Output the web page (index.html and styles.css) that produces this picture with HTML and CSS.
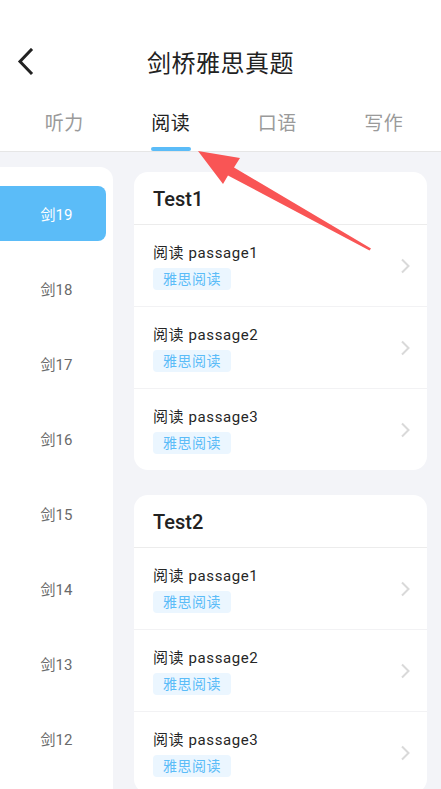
FILE: index.html
```html
<!DOCTYPE html>
<html lang="zh">
<head>
<meta charset="utf-8">
<title>剑桥雅思真题</title>
<link rel="stylesheet" href="styles.css">
</head>
<body>
<div class="page">
  <header class="header">
    <div class="back">
      <svg width="20" height="28" viewBox="0 0 20 28"><polyline points="14,2 3,13.5 14,25" fill="none" stroke="#222" stroke-width="3" stroke-linecap="square"/></svg>
    </div>
    <div class="title">剑桥雅思真题</div>
    <div></div>
  </header>
  <nav class="tabs">
    <div class="tab"><span class="tab-text">听力</span><span class="bar"></span></div>
    <div class="tab active"><span class="tab-text">阅读</span><span class="bar"></span></div>
    <div class="tab"><span class="tab-text">口语</span><span class="bar"></span></div>
    <div class="tab"><span class="tab-text">写作</span><span class="bar"></span></div>
  </nav>
  <main class="main">
    <aside class="side">
      <div class="side-item selected"><span class="pill">剑19</span></div>
      <div class="side-item"><span class="pill">剑18</span></div>
      <div class="side-item"><span class="pill">剑17</span></div>
      <div class="side-item"><span class="pill">剑16</span></div>
      <div class="side-item"><span class="pill">剑15</span></div>
      <div class="side-item"><span class="pill">剑14</span></div>
      <div class="side-item"><span class="pill">剑13</span></div>
      <div class="side-item"><span class="pill">剑12</span></div>
    </aside>
    <section class="content">
      <div class="card">
        <div class="card-head">Test1</div>
        <div class="row"><div class="row-main"><div class="row-title">阅读 passage1</div><span class="tag">雅思阅读</span></div><svg class="chev" width="10" height="16" viewBox="0 0 10 16"><polyline points="2,1.5 8.5,8 2,14.5" fill="none" stroke="#d9d9d9" stroke-width="2"/></svg></div>
        <div class="row"><div class="row-main"><div class="row-title">阅读 passage2</div><span class="tag">雅思阅读</span></div><svg class="chev" width="10" height="16" viewBox="0 0 10 16"><polyline points="2,1.5 8.5,8 2,14.5" fill="none" stroke="#d9d9d9" stroke-width="2"/></svg></div>
        <div class="row last"><div class="row-main"><div class="row-title">阅读 passage3</div><span class="tag">雅思阅读</span></div><svg class="chev" width="10" height="16" viewBox="0 0 10 16"><polyline points="2,1.5 8.5,8 2,14.5" fill="none" stroke="#d9d9d9" stroke-width="2"/></svg></div>
      </div>
      <div class="card">
        <div class="card-head">Test2</div>
        <div class="row"><div class="row-main"><div class="row-title">阅读 passage1</div><span class="tag">雅思阅读</span></div><svg class="chev" width="10" height="16" viewBox="0 0 10 16"><polyline points="2,1.5 8.5,8 2,14.5" fill="none" stroke="#d9d9d9" stroke-width="2"/></svg></div>
        <div class="row"><div class="row-main"><div class="row-title">阅读 passage2</div><span class="tag">雅思阅读</span></div><svg class="chev" width="10" height="16" viewBox="0 0 10 16"><polyline points="2,1.5 8.5,8 2,14.5" fill="none" stroke="#d9d9d9" stroke-width="2"/></svg></div>
        <div class="row last"><div class="row-main"><div class="row-title">阅读 passage3</div><span class="tag">雅思阅读</span></div><svg class="chev" width="10" height="16" viewBox="0 0 10 16"><polyline points="2,1.5 8.5,8 2,14.5" fill="none" stroke="#d9d9d9" stroke-width="2"/></svg></div>
      </div>
    </section>
  </main>
  <svg class="arrow" width="441" height="789" viewBox="0 0 441 789">
    <polygon points="198,151 240,158 234,167.5 371,248.5 369.5,250.5 228,175.5 223,184" fill="#f95555"/>
  </svg>
</div>
</body>
</html>
```

FILE: styles.css
```css
html, body {
  margin: 0;
  padding: 0;
  height: 789px;
  overflow: hidden;
  background: #fff;
}
body {
  font-family: Roboto, "Noto Sans CJK SC", sans-serif;
  color: #222;
}
.page {
  position: relative;
  width: 441px;
  height: 789px;
  overflow: hidden;
}
.header {
  display: grid;
  grid-template-columns: 60px 1fr 60px;
  align-items: center;
  height: 48px;
  padding-top: 38px;
}
.back {
  padding-left: 17px;
  display: flex;
  align-items: center;
}
.title {
  text-align: center;
  font-size: 24px;
  letter-spacing: 0.5px;
  color: #222;
  line-height: 32px;
  padding-top: 3px;
}
.tabs {
  display: flex;
  height: 65px;
  padding: 0 4px 0 11px;
  border-bottom: 1px solid #e6e6e6;
}
.tab {
  flex: 1;
  display: flex;
  flex-direction: column;
  align-items: center;
  padding-top: 25px;
  box-sizing: border-box;
}
.tab-text {
  font-size: 19px;
  line-height: 26px;
  color: #9a9a9a;
  letter-spacing: 0.5px;
}
.bar {
  margin-top: 10px;
  width: 40px;
  height: 4px;
  border-radius: 2px;
}
.tab.active .tab-text { color: #222; }
.tab.active .bar { background: #5bbcf8; }
.main {
  display: flex;
  align-items: flex-start;
  background: #f3f4f8;
  height: 700px;
}
.side {
  width: 113px;
  margin-top: 15px;
  padding-top: 9px;
  background: #fff;
  border-top-right-radius: 13px;
  height: 700px;
}
.side-item {
  height: 75px;
  display: flex;
  align-items: center;
}
.pill {
  width: 106px;
  height: 55px;
  box-sizing: border-box;
  padding-left: 7px;
  display: flex;
  align-items: center;
  justify-content: center;
  font-size: 15px;
  color: #6a6a6a;
  border-radius: 0 8px 8px 0;
}
.side-item.selected .pill {
  background: #5bbcf8;
  color: #fff;
}
.content {
  width: 293px;
  margin-left: 21px;
  margin-top: 20px;
  display: flex;
  flex-direction: column;
  gap: 25px;
}
.card {
  background: #fff;
  border-radius: 14px;
}
.card-head {
  height: 51px;
  display: flex;
  align-items: center;
  padding-left: 19px;
  padding-top: 1px;
  font-size: 20px;
  font-weight: 500;
  color: #222;
  border-bottom: 1px solid #ececec;
}
.row {
  display: flex;
  align-items: center;
  justify-content: space-between;
  padding: 17px 17px 16px 19px;
  border-bottom: 1px solid #f2f2f4;
  height: 48px;
}
.row.last { border-bottom: none; }
.row-main {
  display: flex;
  flex-direction: column;
  align-items: flex-start;
}
.row-title {
  font-size: 15px;
  line-height: 22px;
  letter-spacing: 0.6px;
  color: #262626;
}
.tag {
  margin-top: 4px;
  height: 22px;
  line-height: 22px;
  padding: 0 10px;
  font-size: 14px;
  letter-spacing: 0.5px;
  color: #5bbcf8;
  background: #ebf6ff;
  border-radius: 4px;
}
.arrow {
  position: absolute;
  left: 0;
  top: 0;
  pointer-events: none;
}
```
